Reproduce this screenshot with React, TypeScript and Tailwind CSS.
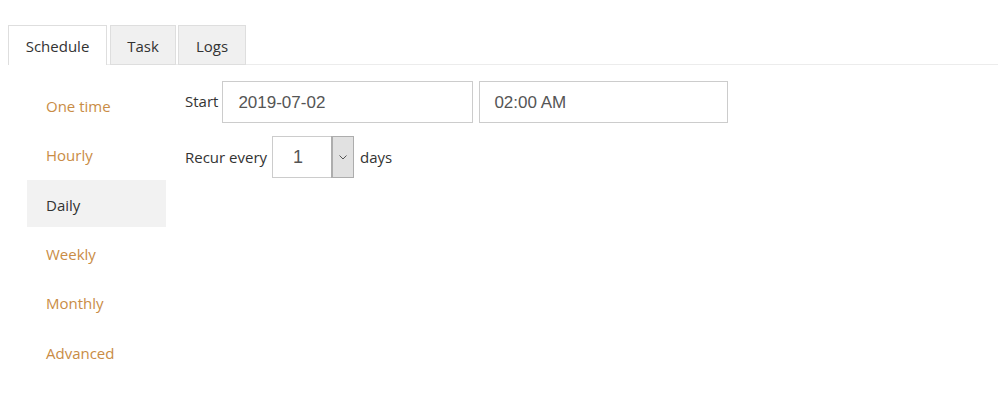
export default function App() {
  const items = ["One time", "Hourly", "Daily", "Weekly", "Monthly", "Advanced"];
  const active = "Daily";

  return (
    <div className="h-[405px] w-[1006px] bg-white pl-2 pr-2 pt-[25px] font-['Open_Sans',sans-serif] text-[15px] text-[#333]">
      <div className="flex border-b border-[#ececec] pl-0">
        <div className="-mb-px flex h-[40px] w-[99px] items-center justify-center border border-b-0 border-[#dedede] bg-white pt-[2px]">
          Schedule
        </div>
        <div className="-mb-px ml-[3px] flex h-[40px] w-[66px] items-center justify-center border border-[#dedede] bg-[#f0f0f0] pt-[2px]">
          Task
        </div>
        <div className="-mb-px ml-[2px] flex h-[40px] w-[68px] items-center justify-center border border-[#dedede] bg-[#f0f0f0] pt-[2px]">
          Logs
        </div>
      </div>

      <div className="flex pt-[16px]">
        <ul className="ml-[19px] flex w-[139px] flex-col gap-[2.4px]">
          {items.map((item) => (
            <li
              key={item}
              className={
                item === active
                  ? "flex h-[47px] items-center bg-[#f2f2f2] pl-[19px] pt-[3px] text-[#333]"
                  : "flex h-[47px] items-center pl-[19px] pt-[3px] text-[#c98c45]"
              }
            >
              {item}
            </li>
          ))}
        </ul>

        <div className="ml-[19px] flex flex-col gap-[13px]">
          <div className="flex items-center">
            <span className="mr-[4px] -mt-[2px]">Start</span>
            <div className="flex h-[42px] w-[251px] items-center border border-[#cccccc] pl-[15px] pt-[1px] font-['Liberation_Sans',Arial,sans-serif] text-[17px] text-[#555]">
              2019-07-02
            </div>
            <div className="ml-[6px] flex h-[42px] w-[249px] items-center border border-[#cccccc] pl-[14px] pt-[1px] font-['Liberation_Sans',Arial,sans-serif] text-[17px] text-[#555]">
              02:00 AM
            </div>
          </div>
          <div className="flex items-center">
            <span className="mr-[5px]">Recur every</span>
            <div className="flex h-[42px] w-[82px] border border-[#cccccc]">
              <div className="flex flex-1 items-center pl-[20px] pt-[1px] font-['Liberation_Sans',Arial,sans-serif] text-[18px] text-[#555]">
                1
              </div>
              <div className="flex w-[21px] items-center justify-center border-l border-[#adadad] bg-[#e1e1e1] outline outline-1 outline-[#adadad]">
                <svg width="8" height="5" viewBox="0 0 8 5" fill="none">
                  <path d="M0.5 0.5L4 4L7.5 0.5" stroke="#555" strokeWidth="1" />
                </svg>
              </div>
            </div>
            <span className="ml-[6px]">days</span>
          </div>
        </div>
      </div>
    </div>
  );
}
